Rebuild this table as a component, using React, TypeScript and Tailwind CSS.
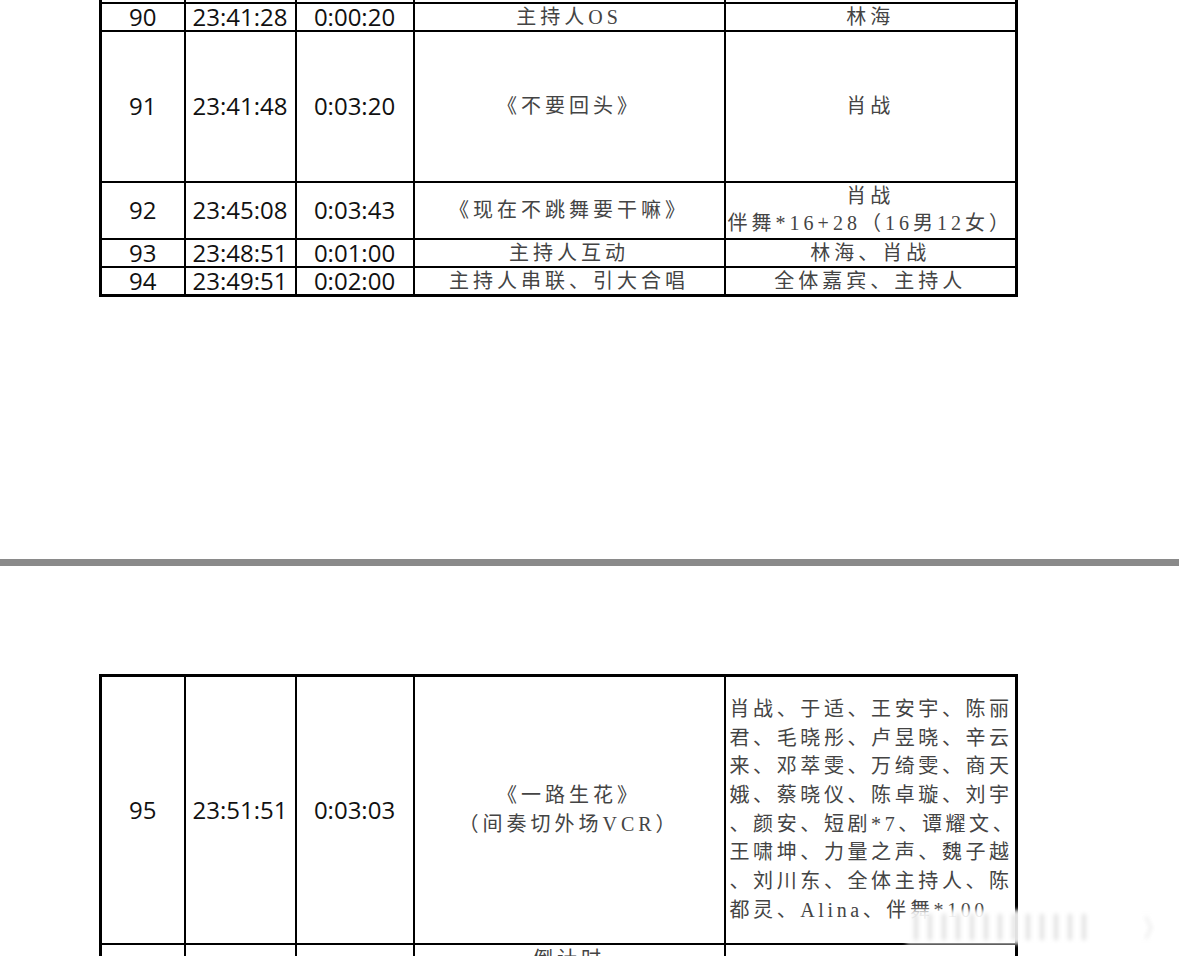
import React from 'react';

const numCls =
  "font-['Open_Sans',sans-serif] text-[24px] leading-none text-[#111] text-center align-middle border-2 border-black p-0";
const cnCls =
  "font-['Liberation_Serif','Noto_Sans_CJK_SC',serif] text-[20px] leading-[24px] tracking-[4px] text-[#444] text-center align-middle whitespace-nowrap border-2 border-black p-0";

interface RowData {
  no: string;
  start: string;
  dur: string;
  title: React.ReactNode;
  cast: React.ReactNode;
  height: string;
}

const topRows: RowData[] = [
  { no: '90', start: '23:41:28', dur: '0:00:20', title: '主持人OS', cast: '林海', height: 'h-[28px]' },
  { no: '91', start: '23:41:48', dur: '0:03:20', title: '《不要回头》', cast: '肖战', height: 'h-[151px]' },
  {
    no: '92',
    start: '23:45:08',
    dur: '0:03:43',
    title: '《现在不跳舞要干嘛》',
    cast: (
      <div className="leading-[27px]">
        <div>肖战</div>
        <div>伴舞*16+28（16男12女）</div>
      </div>
    ),
    height: 'h-[57px]',
  },
  { no: '93', start: '23:48:51', dur: '0:01:00', title: '主持人互动', cast: '林海、肖战', height: 'h-[28px]' },
  { no: '94', start: '23:49:51', dur: '0:02:00', title: '主持人串联、引大合唱', cast: '全体嘉宾、主持人', height: 'h-[29px]' },
];

const castLines = [
  '肖战、于适、王安宇、陈丽',
  '君、毛晓彤、卢昱晓、辛云',
  '来、邓萃雯、万绮雯、商天',
  '娥、蔡晓仪、陈卓璇、刘宇',
  '、颜安、短剧*7、谭耀文、',
  '王啸坤、力量之声、魏子越',
  '、刘川东、全体主持人、陈',
  '都灵、Alina、伴舞*100',
];

const Cols: React.FC = () => (
  <colgroup>
    <col className="w-[84px]" />
    <col className="w-[111px]" />
    <col className="w-[118px]" />
    <col className="w-[311px]" />
    <col className="w-[292px]" />
  </colgroup>
);

const ScheduleRow: React.FC<{ row: RowData }> = ({ row }) => (
  <tr className={row.height}>
    <td className={numCls}>{row.no}</td>
    <td className={numCls}>{row.start}</td>
    <td className={numCls}>{row.dur}</td>
    <td className={cnCls}>{row.title}</td>
    <td className={cnCls}>{row.cast}</td>
  </tr>
);

const Watermark: React.FC = () => (
  <div className="absolute left-[906px] top-[910px] w-[270px] h-[34px] bg-white/90 blur-[2px] flex items-center gap-[10px] px-[8px]">
    {[0, 1, 2, 3, 4, 5, 6, 7, 8, 9, 10, 11, 12].map((i) => (
      <div key={i} className="w-[4px] h-[26px] bg-[#d4d4d4]/70" />
    ))}
    <span className="ml-auto text-[26px] leading-none text-[#d0d0d0] font-['Noto_Sans',sans-serif]">〉</span>
  </div>
);

export default function App() {
  return (
    <div className="relative w-[1179px] h-[956px] overflow-hidden bg-white">
      {/* upper page */}
      <table className="table-fixed border-collapse border-[3px] border-black w-[916px] ml-[99px] mt-[-29px]">
        <Cols />
        <tbody>
          <tr className="h-[30px]">
            <td className={numCls}></td>
            <td className={numCls}></td>
            <td className={numCls}></td>
            <td className={`${cnCls} !align-bottom`}>主持人口播串联</td>
            <td className={cnCls}></td>
          </tr>
          {topRows.map((r) => (
            <ScheduleRow key={r.no} row={r} />
          ))}
        </tbody>
      </table>

      {/* page divider */}
      <div className="mt-[262px] h-[7px] bg-[#8a8a8a]" />

      {/* lower page */}
      <table className="table-fixed border-collapse border-[3px] border-black w-[916px] ml-[99px] mt-[108px]">
        <Cols />
        <tbody>
          <tr className="h-[268px]">
            <td className={numCls}>95</td>
            <td className={numCls}>23:51:51</td>
            <td className={numCls}>0:03:03</td>
            <td className={`${cnCls} !leading-[29px]`}>
              <div>《一路生花》</div>
              <div>（间奏切外场VCR）</div>
            </td>
            <td className={`${cnCls} !text-left !leading-[28.7px] !tracking-[3.6px] pl-[4px]`}>
              {castLines.map((l, i) => (
                <div key={i}>{l}</div>
              ))}
            </td>
          </tr>
          <tr className="h-[60px]">
            <td className={numCls}></td>
            <td className={numCls}></td>
            <td className={numCls}></td>
            <td className={`${cnCls} !align-top pt-[2px]`}>倒计时</td>
            <td className={cnCls}></td>
          </tr>
        </tbody>
      </table>

      <Watermark />
    </div>
  );
}
